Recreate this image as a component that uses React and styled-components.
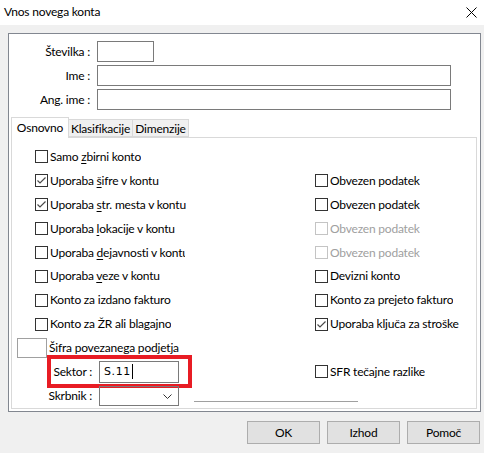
import React from "react";
import styled, { createGlobalStyle } from "styled-components";

const Global = createGlobalStyle`
  html, body { margin: 0; padding: 0; background: #f0f0f0; }
  body { font-family: Lato, "Noto Sans", "Liberation Sans", sans-serif; font-size: 12px; letter-spacing: -0.2px; color: #000; }
  * { box-sizing: border-box; }
`;

const Window = styled.div`
  width: 484px;
  height: 453px;
  background: #f0f0f0;
  display: flex;
  flex-direction: column;
  overflow: hidden;
`;

const TitleBar = styled.div`
  height: 25px;
  background: #fff;
  display: flex;
  align-items: center;
  justify-content: space-between;
  padding: 0 7px 1px 4px;
`;

const Title = styled.span`
  font-size: 12px;
  line-height: 16px;
`;

const Body = styled.div`
  padding: 8px 3px 0 8px;
`;

const OuterPanel = styled.div`
  height: 379px;
  border: 1px solid #828790;
  background: #fff;
  display: flex;
  flex-direction: column;
  padding: 7px 3px 2px 1px;
`;

const Fields = styled.div`
  display: grid;
  grid-template-columns: 80px 1fr;
  column-gap: 7px;
  row-gap: 3px;
  align-items: center;
`;

const FieldLabel = styled.label`
  text-align: right;
  line-height: 16px;
`;

const TextBox = styled.div`
  height: ${(p) => p.$h || 21}px;
  width: ${(p) => p.$w}px;
  border: 1px solid #7a7a7a;
  background: #fff;
`;

const TabStrip = styled.div`
  margin-top: 6px;
  height: 21px;
  display: flex;
  align-items: flex-end;
  margin-left: 1px;
  position: relative;
  z-index: 1;
`;

const Tab = styled.div`
  height: ${(p) => (p.$active ? 21 : 18)}px;
  width: ${(p) => p.$w}px;
  margin-bottom: ${(p) => (p.$active ? -1 : 0)}px;
  border: 1px solid #d9d9d9;
  border-bottom: ${(p) => (p.$active ? "none" : "1px solid #d9d9d9")};
  border-left: ${(p) => (p.$noLeft ? "none" : "1px solid #d9d9d9")};
  background: ${(p) => (p.$active ? "#fff" : "#f0f0f0")};
  display: flex;
  justify-content: center;
  align-items: ${(p) => (p.$active ? "flex-start" : "center")};
  padding-top: ${(p) => (p.$active ? 2 : 0)}px;
  line-height: 15px;
  white-space: nowrap;
`;

const TabPanel = styled.div`
  flex: 1;
  margin-left: 1px;
  border: 1px solid #d9d9d9;
  background: #fff;
  padding: 7px 0 0 5px;
  display: grid;
  grid-template-columns: 298px 1fr;
  grid-auto-rows: 23.9px;
  align-items: center;
`;

const Cell = styled.div`
  position: relative;
  display: flex;
  align-items: center;
  padding-left: ${(p) => p.$indent || 0}px;
  grid-column: ${(p) => p.$col || "auto"};
`;

const Box = styled.span`
  width: 13px;
  height: 13px;
  flex: none;
  border: 1px solid ${(p) => (p.$disabled ? "#c4c4c4" : "#333")};
  background: #fff;
  display: flex;
  align-items: center;
  justify-content: center;
`;

const CbText = styled.span`
  margin-left: 2px;
  white-space: nowrap;
  line-height: 16px;
  color: ${(p) => (p.$disabled ? "#a0a0a0" : "#000")};
  overflow: hidden;
  max-width: ${(p) => (p.$clip ? `${p.$clip}px` : "none")};
  u { text-decoration-thickness: 1px; text-underline-offset: 2px; }
`;

const Check = () => (
  <svg width="11" height="11" viewBox="0 0 11 11">
    <path d="M1.5 5.5 L4 8 L9.5 2.5" fill="none" stroke="#4a4a4a" strokeWidth="1.2" />
  </svg>
);

const CheckBox = ({ checked, disabled, clip, children }) => (
  <>
    <Box $disabled={disabled}>{checked && <Check />}</Box>
    <CbText $disabled={disabled} $clip={clip}>{children}</CbText>
  </>
);

const SmallBox = styled.div`
  width: 30px;
  height: 20px;
  border: 1px solid #a0a0a0;
  flex: none;
`;

const RowLabel = styled.span`
  width: 75px;
  text-align: right;
  flex: none;
  line-height: 16px;
`;

const Input = styled.div`
  margin-left: 7px;
  width: 80px;
  height: ${(p) => p.$h}px;
  border: 1px solid #7a7a7a;
  display: flex;
  align-items: center;
  padding-left: 4px;
  position: relative;
  flex: none;
`;

const InputText = styled.span`
  font-family: "DejaVu Sans", sans-serif;
  font-size: 11px;
  letter-spacing: 0.6px;
  line-height: 14px;
`;

const Caret = styled.span`
  display: inline-block;
  width: 1px;
  height: 15px;
  background: #000;
  margin-left: 1px;
`;

const Chevron = styled.svg`
  position: absolute;
  right: 6px;
  top: 7px;
`;

const Highlight = styled.div`
  position: absolute;
  left: 30px;
  top: -6px;
  width: 145px;
  height: 33px;
  border: 4px solid #e81c24;
  pointer-events: none;
`;

const Line = styled.div`
  margin-left: 15px;
  width: 164px;
  height: 1px;
  background: #a0a0a0;
  transform: translateY(6px);
`;

const Footer = styled.div`
  display: flex;
  justify-content: flex-end;
  gap: 7px;
  padding: 9px 4px 0 0;
`;

const Button = styled.button`
  width: 73px;
  height: 23px;
  background: #e1e1e1;
  border: 1px solid #adadad;
  font-family: inherit;
  font-size: 12px;
  letter-spacing: inherit;
  color: #000;
  padding: 0;
`;

export default function App() {
  return (
    <Window>
      <Global />
      <TitleBar>
        <Title>Vnos novega konta</Title>
        <svg width="11" height="11" viewBox="0 0 11 11">
          <path d="M0.5 0.5 L10.5 10.5 M10.5 0.5 L0.5 10.5" stroke="#000" strokeWidth="1" />
        </svg>
      </TitleBar>
      <Body>
        <OuterPanel>
          <Fields>
            <FieldLabel>Številka :</FieldLabel>
            <TextBox $w={57} />
            <FieldLabel>Ime :</FieldLabel>
            <TextBox $w={354} />
            <FieldLabel>Ang. ime :</FieldLabel>
            <TextBox $w={354} />
          </Fields>
          <TabStrip>
            <Tab $active $w={58}>Osnovno</Tab>
            <Tab $w={64} $noLeft>Klasifikacije</Tab>
            <Tab $w={56} $noLeft>Dimenzije</Tab>
          </TabStrip>
          <TabPanel>
            <Cell $indent={18} $col="1">
              <CheckBox>Samo <u>z</u>birni konto</CheckBox>
            </Cell>
            <Cell $indent={18} $col="1">
              <CheckBox checked>Uporaba <u>š</u>ifre v kontu</CheckBox>
            </Cell>
            <Cell $col="2">
              <CheckBox>Obvezen podatek</CheckBox>
            </Cell>
            <Cell $indent={18} $col="1">
              <CheckBox checked>Uporaba <u>s</u>tr. mesta v kontu</CheckBox>
            </Cell>
            <Cell $col="2">
              <CheckBox>Obvezen podatek</CheckBox>
            </Cell>
            <Cell $indent={18} $col="1">
              <CheckBox>Uporaba <u>l</u>okacije v kontu</CheckBox>
            </Cell>
            <Cell $col="2">
              <CheckBox disabled>Obvezen podatek</CheckBox>
            </Cell>
            <Cell $indent={18} $col="1">
              <CheckBox clip={135}>Uporaba <u>d</u>ejavnosti v kontu</CheckBox>
            </Cell>
            <Cell $col="2">
              <CheckBox disabled>Obvezen podatek</CheckBox>
            </Cell>
            <Cell $indent={18} $col="1">
              <CheckBox>Uporaba <u>v</u>eze v kontu</CheckBox>
            </Cell>
            <Cell $col="2">
              <CheckBox>Devizni konto</CheckBox>
            </Cell>
            <Cell $indent={18} $col="1">
              <CheckBox>Konto za izdano fakturo</CheckBox>
            </Cell>
            <Cell $col="2">
              <CheckBox>Konto za prejeto fakturo</CheckBox>
            </Cell>
            <Cell $indent={18} $col="1">
              <CheckBox>Konto za ŽR ali blagajno</CheckBox>
            </Cell>
            <Cell $col="2">
              <CheckBox checked>Uporaba ključa za stroške</CheckBox>
            </Cell>
            <Cell $col="1">
              <SmallBox />
              <CbText>Šifra povezanega podjetja</CbText>
            </Cell>
            <Cell $col="1">
              <RowLabel>Sektor :</RowLabel>
              <Input $h={22}>
                <InputText>S.11</InputText>
                <Caret />
              </Input>
              <Highlight />
            </Cell>
            <Cell $col="2">
              <CheckBox>SFR tečajne razlike</CheckBox>
            </Cell>
            <Cell $col="1 / span 2">
              <RowLabel>Skrbnik :</RowLabel>
              <Input $h={20}>
                <Chevron width="9" height="5" viewBox="0 0 9 5">
                  <path d="M0.5 0.5 L4.5 4.5 L8.5 0.5" fill="none" stroke="#333" strokeWidth="1" />
                </Chevron>
              </Input>
              <Line />
            </Cell>
          </TabPanel>
        </OuterPanel>
      </Body>
      <Footer>
        <Button>OK</Button>
        <Button>Izhod</Button>
        <Button>Pomoč</Button>
      </Footer>
    </Window>
  );
}
